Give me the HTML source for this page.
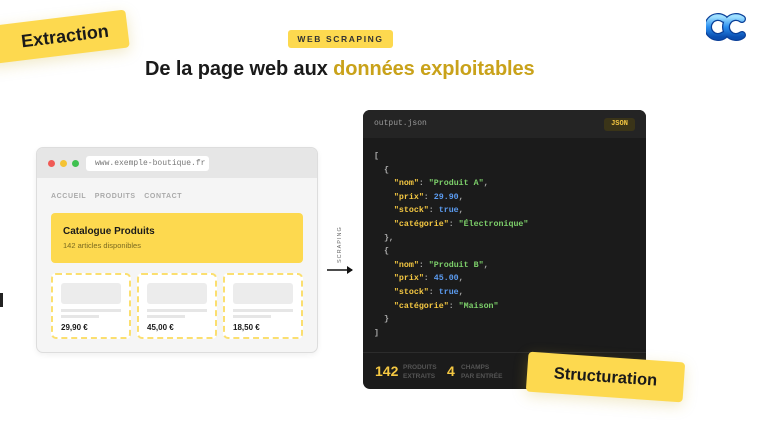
<!DOCTYPE html>
<html><head><meta charset="utf-8"><style>
*{margin:0;padding:0;box-sizing:border-box}
body{width:760px;height:427px;background:#fff;position:relative;overflow:hidden;font-family:"Liberation Sans",sans-serif;color:#1a1a1a}
.abs{position:absolute}
.tag{background:#fdd94f;font-weight:bold;color:#1a1a1a;display:flex;align-items:center;justify-content:center;border-radius:4px;box-shadow:0 4px 14px rgba(200,170,40,.25)}
.mono{font-family:"Liberation Mono",monospace}
.k{color:#f5c842}.s{color:#7ccf6a}.n{color:#5b9bf0}
.card{width:80px;height:66px;background:#fff;border:2px dashed #fbdf70;border-radius:5px;top:125px}
</style></head><body>
<div class="abs tag" style="left:-14px;top:18px;width:142px;height:38px;transform:rotate(-7deg);font-size:18px;padding-left:16px">Extraction</div>
<div class="abs" style="left:288px;top:30px;width:105px;height:18px;background:#fdd94f;border-radius:3px;font-size:8.5px;font-weight:bold;letter-spacing:1.6px;display:flex;align-items:center;justify-content:center;color:#333">WEB SCRAPING</div>
<div class="abs" style="left:145px;top:58px;font-size:20px;font-weight:bold;white-space:nowrap;letter-spacing:-.1px">De la page web aux <span style="color:#c9a21a">données exploitables</span></div>
<svg class="abs" style="left:706px;top:11px" width="42" height="32" viewBox="0 0 42 32">
<defs><linearGradient id="g" x1="0" y1="0" x2="0" y2="1"><stop offset="0" stop-color="#9fe0ff"/><stop offset=".5" stop-color="#2a8ff0"/><stop offset="1" stop-color="#0a4eb0"/></linearGradient></defs>
<path d="M18 8 A10 10 0 1 0 18 24" fill="none" stroke="#0a3f98" stroke-width="8" stroke-linecap="round"/>
<path d="M36 8 A10 10 0 1 0 36 24" fill="none" stroke="#0a3f98" stroke-width="8" stroke-linecap="round"/>
<path d="M18 8 A10 10 0 1 0 18 24" fill="none" stroke="url(#g)" stroke-width="5.5" stroke-linecap="round"/>
<path d="M36 8 A10 10 0 1 0 36 24" fill="none" stroke="url(#g)" stroke-width="5.5" stroke-linecap="round"/>
</svg>
<div class="abs" style="left:0;top:293px;width:3px;height:14px;background:#222"></div>
<div class="abs" style="left:36px;top:147px;width:282px;height:206px;background:#f5f5f5;border:1px solid #ddd;border-radius:7px;overflow:hidden;box-shadow:0 2px 6px rgba(0,0,0,.06)">
<div style="height:30px;background:#e6e6e6;position:relative">
<span class="abs" style="left:11px;top:12px;width:7px;height:7px;border-radius:50%;background:#f05a55"></span>
<span class="abs" style="left:23px;top:12px;width:7px;height:7px;border-radius:50%;background:#f5c333"></span>
<span class="abs" style="left:35px;top:12px;width:7px;height:7px;border-radius:50%;background:#3fc150"></span>
<div class="abs mono" style="left:49px;top:8px;width:123px;height:15px;background:#fff;border-radius:3px;font-size:8px;color:#777;line-height:15px;padding-left:9px">www.exemple-boutique.fr</div>
</div>
<div class="abs" style="left:14px;top:45px;font-size:7px;font-weight:bold;color:#aaa;letter-spacing:.6px;word-spacing:6px">ACCUEIL PRODUITS CONTACT</div>
<div class="abs" style="left:14px;top:65px;width:252px;height:50px;background:#fdd94f;border-radius:4px">
<div style="position:absolute;left:12px;top:13px;font-size:10px;font-weight:bold">Catalogue Produits</div>
<div style="position:absolute;left:12px;top:28px;font-size:7.5px;color:#7a6a20">142 articles disponibles</div>
</div>
<div class="abs card" style="left:14px">
<div style="margin:8px 8px 0;height:21px;background:#ececec;border-radius:3px"></div><div style="margin:5px 8px 0;height:3px;background:#e6e6e6"></div><div style="margin:3px 8px 0;width:38px;height:3px;background:#e6e6e6"></div><div style="margin:5px 8px 0;font-size:8px;font-weight:bold">29,90 €</div></div>
<div class="abs card" style="left:100px">
<div style="margin:8px 8px 0;height:21px;background:#ececec;border-radius:3px"></div><div style="margin:5px 8px 0;height:3px;background:#e6e6e6"></div><div style="margin:3px 8px 0;width:38px;height:3px;background:#e6e6e6"></div><div style="margin:5px 8px 0;font-size:8px;font-weight:bold">45,00 €</div></div>
<div class="abs card" style="left:186px">
<div style="margin:8px 8px 0;height:21px;background:#ececec;border-radius:3px"></div><div style="margin:5px 8px 0;height:3px;background:#e6e6e6"></div><div style="margin:3px 8px 0;width:38px;height:3px;background:#e6e6e6"></div><div style="margin:5px 8px 0;font-size:8px;font-weight:bold">18,50 €</div></div>
</div>
<div class="abs" style="left:334px;top:230px;width:12px;height:36px;"><div style="position:absolute;left:-12px;top:12px;width:36px;transform:rotate(-90deg);font-size:5.5px;letter-spacing:1px;color:#666;text-align:center">SCRAPING</div></div>
<svg class="abs" style="left:326px;top:264px" width="30" height="12"><path d="M1 6H26" stroke="#111" stroke-width="1.5"/><path d="M21 2L27 6L21 10Z" fill="#111"/></svg>
<div class="abs" style="left:363px;top:110px;width:283px;height:279px;background:#1b1b1b;border-radius:7px;overflow:hidden">
<div style="height:28px;background:#242424;position:relative">
<div class="abs mono" style="left:11px;top:9px;font-size:8px;color:#999">output.json</div>
<div class="abs mono" style="left:241px;top:8px;width:31px;height:13px;background:#3a3418;border-radius:3px;font-size:7px;font-weight:bold;color:#f5c842;text-align:center;line-height:13px">JSON</div>
</div>
<pre class="mono" style="position:absolute;left:11px;top:40px;font-size:8.3px;line-height:13.6px;color:#aaa;font-weight:bold">[
  {
    <span class="k">"nom"</span>: <span class="s">"Produit A"</span>,
    <span class="k">"prix"</span>: <span class="n">29.90</span>,
    <span class="k">"stock"</span>: <span class="n">true</span>,
    <span class="k">"catégorie"</span>: <span class="s">"Électronique"</span>
  },
  {
    <span class="k">"nom"</span>: <span class="s">"Produit B"</span>,
    <span class="k">"prix"</span>: <span class="n">45.00</span>,
    <span class="k">"stock"</span>: <span class="n">true</span>,
    <span class="k">"catégorie"</span>: <span class="s">"Maison"</span>
  }
]</pre>
<div style="position:absolute;left:0;top:242px;width:100%;height:1px;background:#2c2c2c"></div>
<div class="abs" style="left:12px;top:253px;font-size:14px;font-weight:bold;color:#f5c842">142</div>
<div class="abs" style="left:40px;top:253px;font-size:6.5px;line-height:9px;color:#555;font-weight:bold">PRODUITS<br>EXTRAITS</div>
<div class="abs" style="left:84px;top:253px;font-size:14px;font-weight:bold;color:#f5c842">4</div>
<div class="abs" style="left:98px;top:253px;font-size:6.5px;line-height:9px;color:#555;font-weight:bold">CHAMPS<br>PAR ENTRÉE</div>
</div>
<div class="abs tag" style="left:527px;top:357px;width:157px;height:40px;transform:rotate(4deg);font-size:16.5px">Structuration</div>
</body></html>
